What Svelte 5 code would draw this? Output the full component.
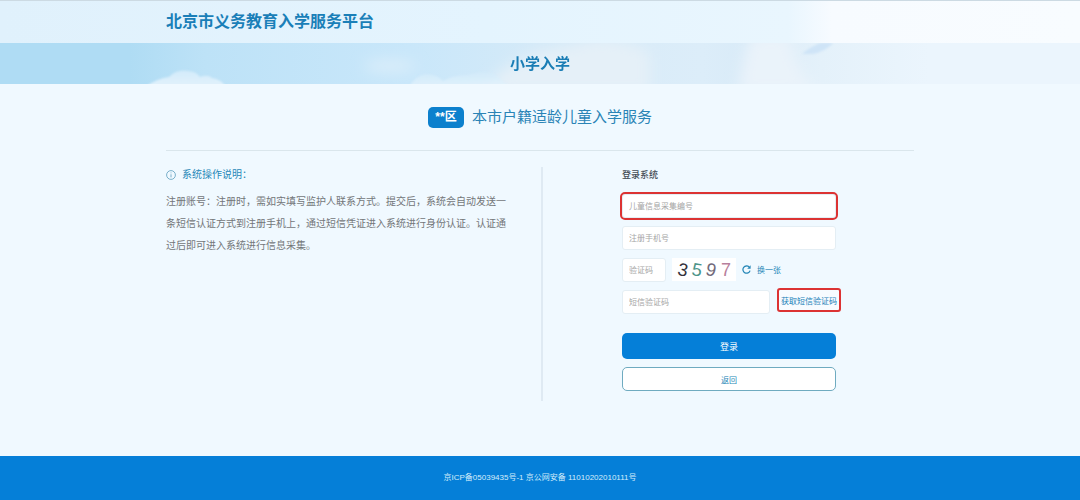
<script>
  let childCode = $state("");
  let phone = $state("");
  let captcha = $state("");
  let smsCode = $state("");

  const digits = [
    { char: "3", x: 6, color: "#35333c", angle: 12 },
    { char: "5", x: 20, color: "#4b9488", angle: 10 },
    { char: "9", x: 34, color: "#716a7a", angle: 14 },
    { char: "7", x: 49, color: "#b77f9c", angle: 0 },
  ];
</script>

<div class="page">
  <header class="top">
    <h1 class="container">北京市义务教育入学服务平台</h1>
  </header>

  <div class="banner">
    <svg class="sky" viewBox="0 0 1080 41" preserveAspectRatio="none" aria-hidden="true">
      <defs>
        <filter id="soft" x="-20%" y="-50%" width="140%" height="200%">
          <feGaussianBlur stdDeviation="7" />
        </filter>
        <filter id="edge">
          <feGaussianBlur stdDeviation="0.8" />
        </filter>
        <linearGradient id="cloud" x1="0" y1="0" x2="0" y2="1">
          <stop offset="0" stop-color="#d3ebfa" />
          <stop offset="1" stop-color="#e3f2fc" />
        </linearGradient>
      </defs>
      <g filter="url(#soft)">
        <ellipse cx="390" cy="23" rx="26" ry="6" fill="#dceefa" />
        <path d="M480 50 Q505 18 545 8 L600 -4 Q640 0 650 12 L650 50Z" fill="#e5f0f8" />
        <path d="M738 50 Q742 16 752 -8 L790 -8 Q790 20 820 50Z" fill="#eaf3fa" />
      </g>
      <g filter="url(#edge)" fill="url(#cloud)">
        <path d="M145 44 Q158 35 169 34 Q177 26 188 28 Q196 28 200 34 Q208 31 212 35 Q221 36 226 44Z" />
        <path d="M409 44 Q416 32 426 31 Q437 31 443 38 Q455 31 467 32 Q480 27 495 31 L510 44Z" opacity="0.8" />
        <path d="M802 11 Q810 4 820 0 L833 0 Q825 9 812 11Z" fill="#cfe4f7" />
      </g>
    </svg>
    <h2>小学入学</h2>
  </div>

  <main class="container">
    <div class="service">
      <span class="district">**区</span>
      <span>本市户籍适龄儿童入学服务</span>
    </div>

    <div class="columns">
      <section class="guide">
        <h3>
          <svg viewBox="0 0 10 10" aria-hidden="true">
            <circle cx="5" cy="5" r="4.4" />
            <path d="M5 4.3V7.4M5 2.5V3.3" />
          </svg>
          系统操作说明：
        </h3>
        <p>
          注册账号：注册时，需如实填写监护人联系方式。提交后，系统会自动发送一条短信认证方式到注册手机上，通过短信凭证进入系统进行身份认证。认证通过后即可进入系统进行信息采集。
        </p>
      </section>

      <form onsubmit={(e) => e.preventDefault()}>
        <h3>登录系统</h3>
        <input class="marked" type="text" placeholder="儿童信息采集编号" aria-label="儿童信息采集编号" bind:value={childCode} />
        <input type="tel" placeholder="注册手机号" aria-label="注册手机号" bind:value={phone} />

        <div class="row">
          <input class="short" type="text" placeholder="验证码" aria-label="验证码" bind:value={captcha} />
          <svg class="captcha" viewBox="0 0 64 23">
            {#each digits as d}
              <text x={d.x} y="18" fill={d.color} transform="rotate({d.angle} {d.x + 5} 12)">{d.char}</text>
            {/each}
          </svg>
          <button class="refresh" type="button">
            <svg viewBox="0 0 10 10" aria-hidden="true">
              <path class="arc" d="M8.9 6.2A4 4 0 1 1 8 2.4" />
              <path class="tip" d="M9.6 0.4V4.2H5.8Z" />
            </svg>
            换一张
          </button>
        </div>

        <div class="row sms">
          <input type="text" placeholder="短信验证码" aria-label="短信验证码" bind:value={smsCode} />
          <button class="send marked" type="button">获取短信验证码</button>
        </div>

        <button class="login" type="submit">登录</button>
        <button class="back" type="button">返回</button>
      </form>
    </div>
  </main>

  <footer>京ICP备05039435号-1 京公网安备 11010202010111号</footer>
</div>

<style>
  :global(body) {
    margin: 0;
  }

  .page {
    display: flex;
    flex-direction: column;
    min-height: 100vh;
    background: #f0f9ff;
    color: #737679;
    font-family: "Liberation Sans", "Noto Sans CJK SC", sans-serif;
  }

  .page * {
    box-sizing: border-box;
  }

  h1,
  h2,
  h3,
  p {
    margin: 0;
  }

  input,
  button {
    font-family: inherit;
  }

  .container {
    width: 100%;
    max-width: 748px;
    margin: 0 auto;
  }

  .top {
    padding: 9px 0;
    border-top: 1px solid #ccdae3;
    background: linear-gradient(90deg, #e0f1fc, #e4f4fe 45%, #e9f6fe 73%, #f7fbff 77%, #f8fcff);
  }

  h1 {
    color: #1a7fb8;
    font-size: 16px;
    line-height: 24px;
  }

  .banner {
    position: relative;
    padding: 9px 0 8px;
    background: linear-gradient(90deg, #afdcf4 12%, #bde2f7 19%, #c9e7fa 38%, #d5eaf8 50%, #dcedf9 65%, #d9ebf8 69%, #e4f1fa 76%, #ebf5fd 86%);
    text-align: center;
  }

  .sky {
    position: absolute;
    inset: 0;
    width: 100%;
    height: 100%;
  }

  h2 {
    position: relative;
    color: #1a7db5;
    font-size: 15px;
    line-height: 24px;
  }

  main {
    flex: 1;
  }

  .service {
    display: flex;
    align-items: center;
    justify-content: center;
    gap: 8px;
    padding: 22px 0;
    border-bottom: 1px solid #dae6ec;
    color: #2a84b6;
    font-size: 15px;
    line-height: 22px;
  }

  .district {
    width: 36px;
    border-radius: 5px;
    background: #0c80cd;
    color: #fff;
    font-size: 12px;
    font-weight: bold;
    line-height: 21px;
    text-align: center;
  }

  .columns {
    display: grid;
    grid-template-columns: 377px 214px;
    column-gap: 79px;
    padding: 16px 0 54px;
  }

  .guide {
    padding-right: 32px;
    border-right: 2px solid #dfeaf3;
  }

  .guide h3 {
    display: flex;
    align-items: center;
    gap: 6px;
    color: #2788b8;
    font-size: 10px;
    font-weight: normal;
    line-height: 16px;
  }

  .guide h3 svg {
    width: 10px;
    height: 10px;
    fill: none;
    stroke: #5b9dbd;
    stroke-width: 0.8;
  }

  .guide p {
    margin-top: 8px;
    font-size: 10px;
    line-height: 22px;
  }

  form {
    display: flex;
    flex-direction: column;
    padding-bottom: 10px;
  }

  form h3 {
    margin-bottom: 11px;
    color: #444c55;
    font-size: 9px;
    font-weight: 500;
    line-height: 16px;
  }

  input {
    width: 100%;
    height: 24px;
    margin-bottom: 8px;
    padding: 0 6px;
    border: 1px solid #e4eef4;
    border-radius: 3px;
    background: #fff;
    color: #444;
    font-size: 8px;
  }

  input::placeholder {
    color: #a5a5a5;
  }

  .marked {
    outline: 2px solid #dc3333;
  }

  .row {
    display: flex;
    align-items: flex-start;
  }

  .short {
    width: 44px;
  }

  .captcha {
    width: 64px;
    height: 23px;
    margin: 0 6px;
    background: #fff;
    font-size: 18px;
  }

  .refresh {
    display: flex;
    align-items: center;
    gap: 6px;
    height: 22px;
    padding: 0;
    border: 0;
    background: none;
    color: #2788b8;
    font-size: 8px;
    cursor: pointer;
  }

  .refresh svg {
    width: 9px;
    height: 9px;
  }

  .arc {
    fill: none;
    stroke: #2788b8;
    stroke-width: 1.4;
  }

  .tip {
    fill: #2788b8;
  }

  .sms {
    display: grid;
    grid-template-columns: 148px 60px;
    gap: 9px;
  }

  .send {
    height: 20px;
    padding: 0;
    border: 0;
    border-radius: 1px;
    background: #f7fbff;
    color: #1a7fb8;
    font-size: 8px;
    white-space: nowrap;
    cursor: pointer;
  }

  .login,
  .back {
    border-radius: 5px;
    cursor: pointer;
  }

  .login {
    height: 26px;
    margin-top: 11px;
    border: 0;
    background: #057fd8;
    color: #fff;
    font-size: 9px;
  }

  .back {
    height: 24px;
    margin-top: 8px;
    border: 1px solid #6fabc0;
    background: #fff;
    color: #2788b8;
    font-size: 8px;
  }

  footer {
    padding: 12px 0;
    background: #057fd8;
    color: #d5edfb;
    font-size: 8px;
    line-height: 20px;
    text-align: center;
  }
</style>
